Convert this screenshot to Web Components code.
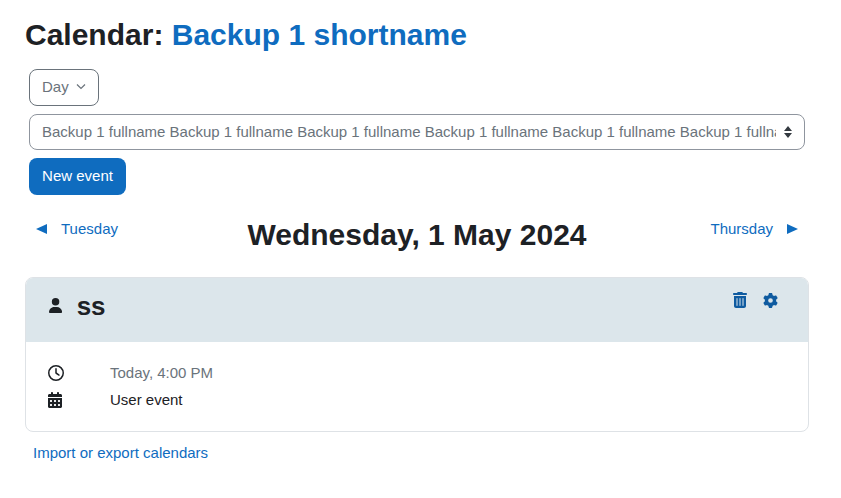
<!DOCTYPE html>
<html lang="en">
<head>
<meta charset="utf-8">
<title>Calendar</title>
<style>
    body {
        margin: 0;
        background: #fff;
        color: #1d2125;
        font-family: "Liberation Sans", Arial, sans-serif;
        font-size: 15px;
    }
</style>
</head>
<body>
<calendar-page></calendar-page>
<script>
const ICONS = {
    user: ['0 0 448 512', 'M224 256A128 128 0 1 0 224 0a128 128 0 1 0 0 256zm-45.700 48C79.800 304 0 383.800 0 482.300C0 498.700 13.300 512 29.700 512H418.300c16.400 0 29.700-13.300 29.700-29.700C448 383.800 368.200 304 269.700 304H178.300z'],
    clock: ['0 0 512 512', 'M464 256A208 208 0 1 1 48 256a208 208 0 1 1 416 0zM0 256a256 256 0 1 0 512 0A256 256 0 1 0 0 256zM232 120V256c0 8 4 15.500 10.700 20l96 64c11 7.400 25.900 4.400 33.300-6.700s4.400-25.900-6.700-33.300L280 243.200V120c0-13.300-10.700-24-24-24s-24 10.700-24 24z'],
    calendar: ['0 0 448 512', 'M128 0c17.700 0 32 14.300 32 32V64H288V32c0-17.700 14.300-32 32-32s32 14.300 32 32V64h48c26.500 0 48 21.500 48 48v48H0V112C0 85.500 21.500 64 48 64H96V32c0-17.700 14.300-32 32-32zM0 192H448V464c0 26.500-21.500 48-48 48H48c-26.500 0-48-21.500-48-48V192zm64 80v32c0 8.800 7.200 16 16 16h32c8.800 0 16-7.200 16-16V272c0-8.800-7.200-16-16-16H80c-8.800 0-16 7.200-16 16zm128 0v32c0 8.800 7.200 16 16 16h32c8.800 0 16-7.200 16-16V272c0-8.800-7.200-16-16-16H208c-8.800 0-16 7.200-16 16zm144-16c-8.800 0-16 7.200-16 16v32c0 8.800 7.200 16 16 16h32c8.800 0 16-7.200 16-16V272c0-8.800-7.200-16-16-16H336zM64 400v32c0 8.800 7.200 16 16 16h32c8.800 0 16-7.200 16-16V400c0-8.800-7.200-16-16-16H80c-8.800 0-16 7.200-16 16zm144-16c-8.800 0-16 7.200-16 16v32c0 8.800 7.200 16 16 16h32c8.800 0 16-7.200 16-16V400c0-8.800-7.200-16-16-16H208zm112 16v32c0 8.800 7.200 16 16 16h32c8.800 0 16-7.200 16-16V400c0-8.800-7.200-16-16-16H336c-8.800 0-16 7.200-16 16z'],
    trash: ['0 0 448 512', 'M135.200 17.700C140.600 6.800 151.700 0 163.800 0H284.200c12.100 0 23.200 6.800 28.600 17.700L320 32h96c17.700 0 32 14.300 32 32s-14.300 32-32 32H32C14.300 96 0 81.700 0 64S14.300 32 32 32h96l7.200-14.300zM32 128H416V448c0 35.300-28.700 64-64 64H96c-35.300 0-64-28.700-64-64V128zm96 64c-8.800 0-16 7.200-16 16V432c0 8.800 7.200 16 16 16s16-7.200 16-16V208c0-8.800-7.200-16-16-16zm96 0c-8.800 0-16 7.200-16 16V432c0 8.800 7.200 16 16 16s16-7.200 16-16V208c0-8.800-7.200-16-16-16zm96 0c-8.800 0-16 7.200-16 16V432c0 8.800 7.200 16 16 16s16-7.200 16-16V208c0-8.800-7.200-16-16-16z'],
    gear: ['0 0 512 512', 'M495.900 166.600c3.200 8.700 .5 18.400-6.400 24.600l-43.300 39.400c1.100 8.300 1.700 16.800 1.700 25.400s-.6 17.100-1.700 25.400l43.300 39.400c6.900 6.200 9.600 15.900 6.400 24.600c-4.400 11.900-9.700 23.300-15.800 34.300l-4.700 8.100c-6.600 11-14 21.400-22.100 31.200c-5.900 7.200-15.700 9.600-24.500 6.800l-55.700-17.700c-13.400 10.300-28.200 18.900-44 25.400l-12.500 57.100c-2 9.100-9 16.300-18.200 17.800c-13.800 2.300-28 3.500-42.500 3.500s-28.700-1.200-42.500-3.500c-9.200-1.500-16.200-8.700-18.200-17.800l-12.500-57.100c-15.800-6.500-30.600-15.100-44-25.400L83.100 425.900c-8.800 2.800-18.600 .3-24.500-6.800c-8.100-9.800-15.500-20.200-22.100-31.200l-4.700-8.100c-6.100-11-11.400-22.400-15.800-34.300c-3.200-8.700-.5-18.400 6.400-24.600l43.300-39.400C64.600 273.100 64 264.600 64 256s.6-17.100 1.700-25.400L22.400 191.200c-6.900-6.200-9.600-15.900-6.400-24.600c4.400-11.900 9.700-23.300 15.800-34.300l4.700-8.100c6.600-11 14-21.400 22.100-31.200c5.900-7.200 15.700-9.600 24.500-6.800l55.700 17.700c13.400-10.300 28.200-18.900 44-25.400l12.500-57.100c2-9.100 9-16.300 18.200-17.800C227.300 1.200 241.500 0 256 0s28.700 1.200 42.500 3.500c9.200 1.500 16.200 8.700 18.200 17.800l12.500 57.100c15.800 6.500 30.600 15.100 44 25.400l55.700-17.700c8.800-2.800 18.600-.3 24.500 6.800c8.100 9.800 15.500 20.200 22.100 31.200l4.700 8.100c6.100 11 11.400 22.400 15.800 34.300zM256 336a80 80 0 1 0 0-160 80 80 0 1 0 0 160z']
};

class FaIcon extends HTMLElement {
    connectedCallback() {
        const [box, d] = ICONS[this.getAttribute('name')];
        this.attachShadow({ mode: 'open' }).innerHTML = `
            <style>
                :host { display: inline-flex; }
                svg { display: block; height: var(--icon-size, 14px); fill: currentColor; }
            </style>
            <svg viewBox="${box}" aria-hidden="true"><path d="${d}"/></svg>
        `;
    }
}

class CalendarControls extends HTMLElement {
    connectedCallback() {
        const name = 'Backup 1 fullname';
        this.attachShadow({ mode: 'open' }).innerHTML = `
            <style>
                :host {
                    display: flex;
                    flex-direction: column;
                    align-items: flex-start;
                    gap: 8px;
                    padding: 0 4px;
                    color: #6a737b;
                }
                .box {
                    display: flex;
                    align-items: center;
                    box-sizing: border-box;
                    border: 1px solid #8f959e;
                    border-radius: 8px;
                    padding: 0 11px 0 12px;
                    line-height: 20px;
                }
                .view { height: 37px; width: 70px; gap: 7px; border-color: #6a737b; padding-bottom: 1px; }
                .view svg { width: 10px; height: 7px; margin-bottom: 1px; }
                .course { height: 36px; width: 776px; gap: 7px; }
                .course span { flex: 1; min-width: 0; overflow: hidden; white-space: nowrap; }
                .course svg { width: 10px; height: 12px; flex: none; }
                .new {
                    box-sizing: border-box;
                    height: 37px;
                    width: 97px;
                    display: flex;
                    align-items: center;
                    justify-content: center;
                    border-radius: 8px;
                    background: #0f6cbf;
                    color: #fff;
                    padding-bottom: 2px;
                }
            </style>
            <div class="box view">Day
                <svg viewBox="0 0 10 7"><path d="M1 1.500l4 4 4-4" fill="none" stroke="#6a737b" stroke-width="1.200"/></svg>
            </div>
            <div class="box course">
                <span>${Array(6).fill(name).join(' ')} fullname</span>
                <svg viewBox="0 0 10 12"><path d="M5 0l4 5H1zM5 12L1 7h8z" fill="#343a40"/></svg>
            </div>
            <div class="new">New event</div>
        `;
    }
}

class DayNav extends HTMLElement {
    connectedCallback() {
        this.attachShadow({ mode: 'open' }).innerHTML = `
            <style>
                :host {
                    display: grid;
                    grid-template-columns: 1fr auto 1fr;
                    align-items: start;
                    padding: 0 11px;
                    color: #0f6cbf;
                }
                a { display: flex; align-items: center; gap: 14px; line-height: 20px; padding-top: 2px; }
                a.next { justify-content: flex-end; }
                svg { width: 11px; height: 10px; fill: #0f6cbf; }
                h2 { margin: 0; font-size: 30px; line-height: 36px; font-weight: 700; color: #1d2125; }
            </style>
            <a><svg viewBox="0 0 11 10"><path d="M11 0v10L0 5z"/></svg>Tuesday</a>
            <h2>Wednesday, 1 May 2024</h2>
            <a class="next">Thursday<svg viewBox="0 0 11 10"><path d="M0 0v10l11-5z"/></svg></a>
        `;
    }
}

class EventCard extends HTMLElement {
    connectedCallback() {
        this.attachShadow({ mode: 'open' }).innerHTML = `
            <style>
                :host {
                    display: block;
                    box-sizing: border-box;
                    width: 784px;
                    border: 1px solid #dee2e6;
                    border-radius: 8px;
                    overflow: hidden;
                }
                header {
                    height: 64px;
                    box-sizing: border-box;
                    background: #dce6eb;
                    display: flex;
                    align-items: flex-start;
                    padding: 14px 30px 0 23px;
                }
                .who { --icon-size: 15px; margin-top: 6px; color: #1d2125; }
                h3 { margin: 0 0 0 14.500px; font-size: 26px; line-height: 28px; font-weight: 700; flex: 1; }
                .actions { display: flex; align-items: center; gap: 16px; color: #0f5ba0; --icon-size: 15px; }
                .body { padding: 21px 21px 21px 22px; display: grid; grid-template-columns: 62px 1fr; row-gap: 7px; line-height: 20px; }
                .body fa-icon { --icon-size: 16px; align-items: center; margin-top: -1px; }
                .muted { color: #6a737b; }
            </style>
            <header>
                <fa-icon class="who" name="user"></fa-icon>
                <h3>ss</h3>
                <div class="actions"><fa-icon name="trash" style="--icon-size:16px"></fa-icon><fa-icon name="gear"></fa-icon></div>
            </header>
            <div class="body">
                <fa-icon name="clock"></fa-icon><div class="muted">Today, 4:00 PM</div>
                <fa-icon name="calendar"></fa-icon><div>User event</div>
            </div>
        `;
    }
}

class CalendarPage extends HTMLElement {
    connectedCallback() {
        this.attachShadow({ mode: 'open' }).innerHTML = `
            <style>
                :host { display: block; padding: 16px 25px 0; }
                h1 { margin: 0 0 16px; font-size: 30px; line-height: 37px; font-weight: 700; }
                h1 a { color: #0f6cbf; }
                day-nav { margin: 22px 0 24px; width: 784px; box-sizing: border-box; }
                .link { display: block; margin: 11px 0 0 8px; color: #0f6cbf; line-height: 20px; }
            </style>
            <h1>Calendar: <a>Backup 1 shortname</a></h1>
            <calendar-controls></calendar-controls>
            <day-nav></day-nav>
            <event-card></event-card>
            <a class="link">Import or export calendars</a>
        `;
    }
}

customElements.define('fa-icon', FaIcon);
customElements.define('calendar-controls', CalendarControls);
customElements.define('day-nav', DayNav);
customElements.define('event-card', EventCard);
customElements.define('calendar-page', CalendarPage);
</script>
</body>
</html>
